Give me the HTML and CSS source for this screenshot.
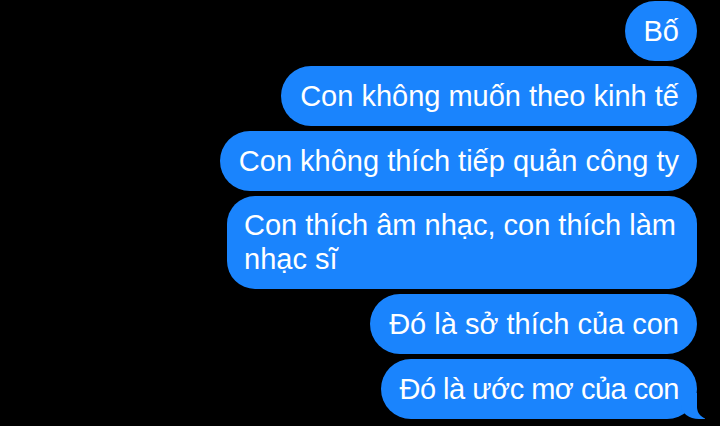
FILE: index.html
```html
<!DOCTYPE html>
<html lang="vi">
<head>
  <meta charset="UTF-8">
  <title>Tin nhắn</title>
  <link rel="stylesheet" href="styles.css">
</head>
<body>
  <div class="chat">
    <div class="bubble">Bố</div>
    <div class="bubble">Con không muốn theo kinh tế</div>
    <div class="bubble">Con không thích tiếp quản công ty</div>
    <div class="bubble wide">Con thích âm nhạc, con thích làm nhạc sĩ</div>
    <div class="bubble">Đó là sở thích của con</div>
    <!-- last message gets the tail -->
    <div class="bubble tail">Đó là ước mơ của con</div>
  </div>
</body>
</html>
```

FILE: styles.css
```css
* {
  box-sizing: border-box;
}

body {
  margin: 0;
  height: 100vh;
  background: #000;
  font-family: "Liberation Sans", Arial, sans-serif;
  overflow: hidden;
}

.chat {
  display: flex;
  flex-direction: column;
  align-items: flex-end;
  gap: 5px;
  padding: 1px 23px 0 0;
}

.bubble {
  position: relative;
  background-color: #1a84fd;
  color: #fff;
  font-size: 29px;
  line-height: 34px;
  padding: 13px 18px 13px 19px;
  border-radius: 30px;
  max-width: 490px;
}

.bubble.wide {
  width: 470px;
  border-radius: 28px;
  padding: 12px 16px 13px 17px;
}

.bubble.tail {
  padding-left: 18px;
  letter-spacing: -0.5px;
}

.tail::before {
  content: "";
  position: absolute;
  z-index: 0;
  bottom: 0;
  right: -8px;
  width: 24px;
  height: 26px;
  background-color: #1a84fd;
  border-bottom-left-radius: 18px 14px;
}

.tail::after {
  content: "";
  position: absolute;
  z-index: 1;
  bottom: 0;
  right: -30px;
  width: 30px;
  height: 30px;
  background-color: #000;
  border-bottom-left-radius: 12px;
}
```
